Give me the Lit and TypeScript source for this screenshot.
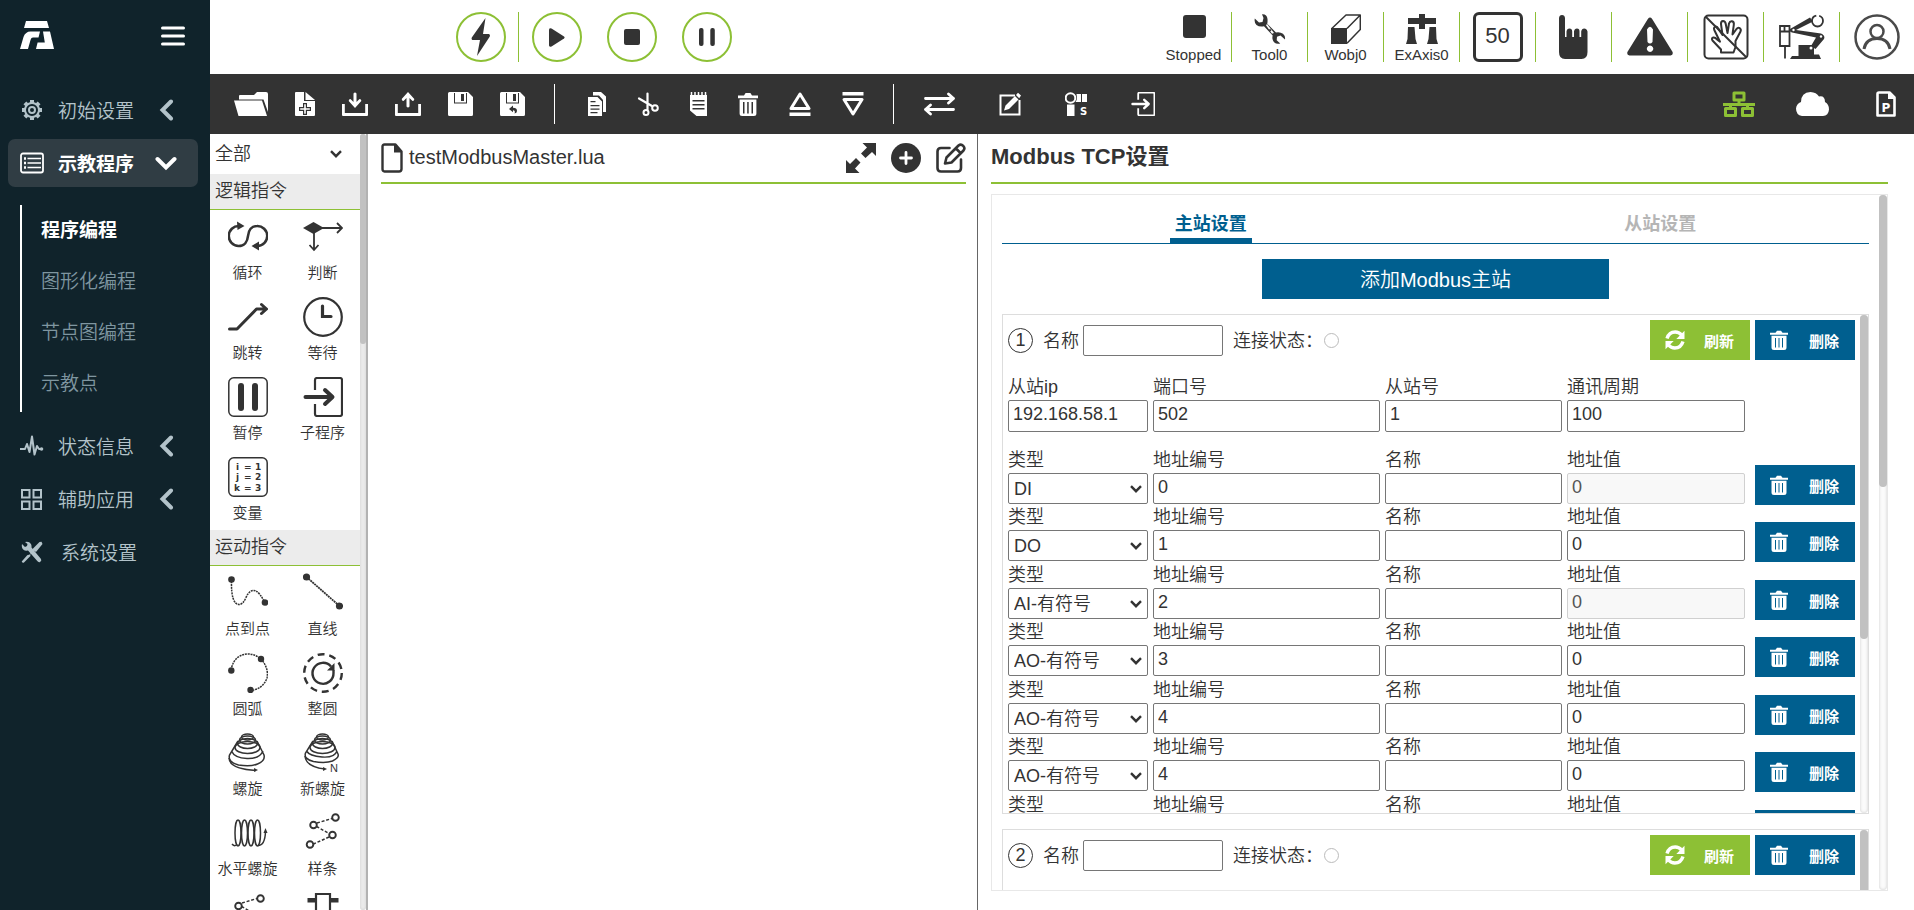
import { LitElement, html, svg, css, TemplateResult, SVGTemplateResult } from "lit";
import { customElement, property, state } from "lit/decorators.js";
import { classMap } from "lit/directives/class-map.js";
import { styleMap } from "lit/directives/style-map.js";

/* ---------- icons: [width, height, drawing] ---------- */

const trash = svg`<path d="M0 3.6h6l1.6-2.6h4.8L14 3.6h6v2.6H0z"/>
  <path fill-rule="evenodd" d="M1.6 7.6h16.8V21.500q0 2.500-2.500 2.500H4.100q-2.500 0-2.500-2.500zM5 10v11.500h1.500V10zm4.200 0v11.500h1.500V10zm4.300 0v11.500H15V10z"/>`;

const exitDoor = (w: number) => svg`<path fill="none" stroke="currentColor" stroke-width=${w} stroke-linejoin="round" d="M12 13V3q0-2 2-2h23q2 0 2 2v34q0 2-2 2H14q-2 0-2-2V27"/>
  <path fill="none" stroke="currentColor" stroke-width="4" stroke-linecap="round" stroke-linejoin="round" d="M2.500 20H29M22 13l7.500 7-7.500 7"/>`;

const floppy = svg`<path fill-rule="evenodd" d="M1.500 0H20l5 5v17.500q0 1.500-1.500 1.500h-22Q0 24 0 22.500v-21Q0 0 1.500 0zM6 1v10.500h13V1z"/>
  <path d="M7 0h11v10.500H7z"/><path fill="#333" d="M13 2h3v7h-3z"/>`;

const cone = svg`<ellipse cx="19.500" cy="4" rx="6" ry="3"/><ellipse cx="19.500" cy="7" rx="8" ry="4"/><ellipse cx="19.500" cy="10.500" rx="10" ry="5"/><ellipse cx="19.500" cy="14.500" rx="12.500" ry="6"/>`;

const ICONS: Record<string, [number, number, SVGTemplateResult]> = {
  logo: [34, 28, svg`<path d="M6 0h21l2 7H4zM0 28l3.500-12Q5.500 10.500 10.500 10.500H20L18.500 16.500H13q-1.800 0-2.400 2.200L8 28zM23 10.500h7L34 28H16l1.600-6.500h7.200z"/>`],
  menu: [24, 20, svg`<path stroke="currentColor" stroke-width="3" stroke-linecap="round" d="M1.500 2h21M1.500 10h21M1.500 18h21"/>`],
  gear: [24, 22, svg`<g fill="none" stroke="currentColor"><circle cx="12" cy="11" r="7" stroke-width="2"/><circle cx="12" cy="11" r="3" stroke-width="2"/>
    <path stroke-width="4" d="M12 1v3M12 18v3M2 11h3M19 11h3M4.900 3.900l2 2M17.100 16.100l2 2M4.900 18.100l2-2M17.100 5.900l2-2"/></g>`],
  list: [24, 22, svg`<rect x="1" y="1.500" width="22" height="19" rx="2" fill="none" stroke="currentColor" stroke-width="1.800"/>
    <path stroke="currentColor" stroke-width="1.300" d="M7.500 6.500H21M7.500 11H21M7.500 15.500H21"/><path stroke="currentColor" stroke-width="2" stroke-dasharray="2.500 2" d="M5 5.300v12"/>`],
  pulse: [24, 22, svg`<path fill="none" stroke="currentColor" stroke-width="2" stroke-linejoin="round" d="M0 14h5l2-5 2.500 8L12 1.500l2.500 18L17 11l2 3h2"/><circle cx="21.500" cy="14" r="1.800"/>`],
  grid: [24, 22, svg`<path fill="none" stroke="currentColor" stroke-width="2" d="M2 2h7.500v7.500H2zM13.500 2H21v7.500h-7.500zM2 13.500h7.500V21H2zM13.500 13.500H21V21h-7.500z"/>`],
  tools: [24, 22, svg`<path d="M2 3l3 3 2-1 .5-2L5 1q4-1 6 2 .8 1.500.5 3.500L21 18q1 2-1 3-1 .6-2.500-.8L8 9.500Q3 10.300 2 6.500 1.500 4.500 2 3z"/>
    <path d="M21.500.8L22.500 3 16 11 14 9.800 10 13.800q1 1-.3 2L4 21.500Q2.500 22.300 1.700 20.500L7 14.500q1-1.300 2-.5l4-4-1.200-1.300L19.500 1z"/>`],
  chevLeft: [15, 22, svg`<path fill="none" stroke="currentColor" stroke-width="4" stroke-linecap="round" d="M12 2.500L3.500 11l8.500 8.500"/>`],
  chevDown: [22, 15, svg`<path fill="none" stroke="currentColor" stroke-width="4" stroke-linecap="round" d="M2.500 3L11 11.500 19.500 3"/>`],

  bolt: [20, 38, svg`<path d="M14.500 0L12 16h6q1.500.8.8 2.500L6 38l3-16H1.300Q0 21 .8 19.500z"/>`],
  play: [16, 19, svg`<path d="M0 1.500Q.5-.3 2.500.5L15 8.500q1.200 1 0 2L2.500 18.600Q.5 19.300 0 17.500z"/>`],
  stop: [16, 16, svg`<rect width="16" height="16" rx="2"/>`],
  pause: [16, 18, svg`<rect width="4.500" height="18" rx="2"/><rect x="11.300" width="4.500" height="18" rx="2"/>`],
  stopped: [30, 30, svg`<rect x="4" y="1" width="23" height="23" rx="3"/>`],
  wrench: [32, 30, svg`<path fill-rule="evenodd" d="M8 .3Q13 0 13.500 5q.2 3.500-.3 4.700L22 18.500q4-.8 7 1.300 2.500 2.200 2 5.700l-4.500-4-3.500 1.300-.3 3.500 3.500 3.200q-6.500 1.300-7.700-4.500-.3-2 .2-3.400L10 12.300q-4.500 1-7.500-1.300Q0 9 .8 4.500L5 8.500 8.500 8 9.500 4z M12 11.200L18 19.800l2-.8-7-9zM15 15.800l1-1 1.500 1.500-1 1z"/>`],
  cube: [30, 30, svg`<path d="M0 14h16v16H0z"/><path fill="none" stroke="currentColor" stroke-width="1.500" stroke-linejoin="round" d="M.8 14.500L15 1h14.300L16 14.500M29.300 1v14.500L16 29.300"/>`],
  gantry: [32, 30, svg`<path d="M2 4h11V0h6v4h11v6H19v5h-6v-5H2zM2 13h6.500l1 12 1.500 5H0l1.500-5zM23.500 13H30l.5 12 1.500 5H21l1.500-5z"/>`],
  hand: [30, 44, svg`<path d="M0 3Q.3 0 3 0t3 3V22h1.500V16.500q.4-3 3-3t2.700 3V22H15V16.500q.4-3 3-3t2.500 3V22h1.700V16.500q.5-3 3-3t3.300 3V37q0 7-6 7H6q-6 0-6-7z"/>`],
  warn: [46, 40, svg`<path fill-rule="evenodd" d="M21 1.800Q23 -.8 25 1.800L45.600 35q.8 3-2 3.500H2.400Q-.4 38 .4 35zM20 12.500l.5 12.500q2.500 3 5 0L26 12.500q-3-5.500-6 0zM23 28.500a3.200 3.200 0 1 0 .1 0z"/>`],
  noHand: [46, 46, svg`<g fill="none" stroke="currentColor" stroke-width="2"><rect x="1.500" y="1.500" width="43" height="43" rx="4"/>
    <path stroke-linejoin="round" d="M18 38.500V35.500L9.500 26.500q-1.500-2.500 1-3 1.800-.2 3.500 2l3 2.200L11.300 16q-1-2.700 1.200-3.400 1.800-.3 2.800 2L19.500 21 18 10q-.2-2.800 2-3 2.200 0 2.700 2.700L24.500 19 26 9.500q.8-2.600 3-2.200 2.300.6 1.800 3.500L29.500 20.500l4-5.500q1.500-1.800 3.300-.8 1.700 1.300.6 3.500L32.500 27v6l-2 5.500z"/><path d="M3 3l40 40"/></g>`],
  robot: [46, 46, svg`<g fill="none" stroke="currentColor"><path stroke-width="1.800" d="M1 12h9.500v20H1zM1 17.500h9.500M5.500 12v5.500M6 32v12.500"/>
    <circle cx="38.500" cy="7" r="5.500" stroke-width="1.800" stroke-dasharray="24 3"/></g>
    <path d="M11 15L31 3.500l3 4L17 16l25 3.500q4.500 2 3 5.500L36.500 35 32 32l5-8.500L13 18.500q-3-1-2-3.500zM19.500 31H35v9.500h5L42 45H11l2-3h6.500z"/>
    <circle cx="14.500" cy="16" r="1.200" fill="#fff"/><circle cx="42" cy="22.500" r="1.200" fill="#fff"/><circle cx="32" cy="34" r="1.500" fill="#fff"/>`],
  user: [46, 46, svg`<g fill="none" stroke="#4a4a4a" stroke-width="2.500"><circle cx="23" cy="23" r="21.500"/><circle cx="23" cy="17.500" r="6.500"/><path stroke-width="3" d="M10 35q2-10.500 13-10.500T36 35"/></g>`],

  folder: [34, 24, svg`<path d="M5 4q0-1 1-1h14l3-3h9q2 0 2 2v18L29.500 7.500H5zM0 8.500h28L33 24H4.500z"/>`],
  fileNew: [20, 24, svg`<path fill-rule="evenodd" d="M1 0h8v9h11v14q0 1-1 1H1q-1 0-1-1V1Q0 0 1 0zM8 11v4H4v4h4v4h4v-4h4v-4h-4v-4zM9.200 12.200h1.600v4h4v1.600h-4v4H9.200v-4h-4v-1.600h4z"/><path d="M10.500 0L20 8h-9.500z"/>`],
  download: [26, 24, svg`<path d="M0 12h2.800v9h20.400v-9H26v11q0 1-1 1H1q-1 0-1-1zM11.500 1.500q1.500-2 3 0V10l3-3q2 0 1.800 2L13 16 6.700 9q0-2 1.800-2l3 3z"/>`],
  upload: [26, 24, svg`<path d="M0 12h2.800v9h20.400v-9H26v11q0 1-1 1H1q-1 0-1-1zM11.500 14.500q1.500 2 3 0V6l3 3q2 0 1.800-2L13 0 6.700 7q0 2 1.800 2l3-3z"/>`],
  save: [25, 24, floppy],
  saveAs: [25, 24, svg`${floppy}<path fill="#333" d="M9 17l4-3.500v2.300q4 0 4 3.200 0 2-2.500 2.500 1.200-3-1.500-3.200v2z"/>`],
  copy: [18, 24, svg`<path d="M5 0h8l5 4.500V20h-3V8l-4-4.500H5z"/><path fill-rule="evenodd" d="M0 5h9.500L14 9.500V24H0zM2.500 9v1.200h5V9zm0 4v1.200h9V13zm0 3.500v1.200h9v-1.200zm0 3.500v1.200h7V20z"/>`],
  cut: [22, 24, svg`<g fill="none" stroke="currentColor" stroke-width="2.200" stroke-linecap="round"><path d="M2 6.500l12.500 7.300M10.500 1.500v16"/><circle cx="18" cy="16" r="2.800" stroke-width="2"/><circle cx="9" cy="20.500" r="2.500" stroke-width="2"/></g>`],
  note: [17, 24, svg`<path fill-rule="evenodd" d="M0 3h17v21H6.500L0 18.500zM2.500 8v1.500h12V8zm0 4v1.500h12V12zm0 4v1.500h12V16z"/><path stroke="currentColor" stroke-width="1.500" d="M1.500 0v3M5 0v3M8.500 0v3M12 0v3M15.500 0v3"/>`],
  trash: [20, 24, trash],
  up: [22, 24, svg`<path fill="none" stroke="currentColor" stroke-width="3" stroke-linejoin="round" d="M11 2L20 16.500H2z"/><path d="M.5 20.500h21V24H.5z"/>`],
  down: [22, 24, svg`<path fill="none" stroke="currentColor" stroke-width="3" stroke-linejoin="round" d="M11 22L20 7.500H2z"/><path d="M.5 0h21v3.500H.5z"/>`],
  swap: [31, 24, svg`<path fill="none" stroke="currentColor" stroke-width="2.800" stroke-linecap="round" stroke-linejoin="round" d="M1.500 6.500h28M24.500 2l5 4.500-5 4.500M29.500 17.500h-28M6.500 13l-5 4.500 5 4.500"/>`],
  edit: [22, 24, svg`<path fill="none" stroke="currentColor" stroke-width="2" d="M16 3.500H1.500V22.500H20.500V8"/><path d="M5 18.500l1.500-5L16 4l3.500 3.500-9.500 9.500zM17 3l2-2.300L22 3.500l-1.800 2.700z"/>`],
  joint: [22, 24, svg`<circle cx="5.500" cy="6" r="4.800" fill="none" stroke="currentColor" stroke-width="2"/><path d="M11.500 2h4.500v8h-5.500q1.500-2 1.500-4zM17 2h5v8h-5zM2 12.500h7.500V24H2z"/><text x="15" y="23" class="glyph-s">S</text>`],
  exit: [24, 24, svg`<g transform="scale(.6)">${exitDoor(3)}</g>`],
  network: [32, 26, svg`<g fill="none" stroke="currentColor" stroke-width="3" stroke-linejoin="round"><rect x="11" y="2" width="10" height="7"/><path d="M16 9v4M0 13.500h32M7.500 13v4M24.500 13v4"/><rect x="2.500" y="17.500" width="10" height="7"/><rect x="19.500" y="17.500" width="10" height="7"/></g>`],
  cloud: [33, 24, svg`<path d="M6 24Q0 23 0 16.500q.5-5 5-6.500Q5 .5 14.500 0q6 .3 8.500 4.500 6-1 6 5.500 4 2 4 7.500-.5 6-6 6.500z"/>`],
  fileP: [20, 26, svg`<path fill="none" stroke="currentColor" stroke-width="2.600" stroke-linejoin="round" d="M3 1.500h10.500l5 5V24.500H1.500V3q0-1.500 1.500-1.500z"/><path d="M12 1v7h7z"/><text x="5.500" y="20.500" class="glyph-p">P</text>`],

  file: [22, 30, svg`<path fill="none" stroke="currentColor" stroke-width="2.400" stroke-linejoin="round" d="M3.500 1.500h11l6 7V26q0 2.500-2.500 2.500H3.500Q1.500 28.500 1.500 26V3.500q0-2 2-2z"/><path d="M13 1v8.500h8z"/>`],
  expand: [30, 30, svg`<path d="M16.500 0H30v13l-4-4-6.500 6-4.500-4.500L21 4.500zM13.500 30H0V17l4 4 6-6 4.500 4.500L9 25.500z"/>`],
  plus: [30, 30, svg`<circle cx="15" cy="15" r="15"/><path stroke="#fff" stroke-width="2.800" stroke-linecap="round" d="M15 9.500v11M9.500 15h11"/>`],
  compose: [30, 30, svg`<g fill="none" stroke="currentColor" stroke-width="2.600" stroke-linecap="round" stroke-linejoin="round"><path d="M13.500 5H5Q1.500 5 1.500 8.500V25Q1.500 28.500 5 28.500h16.500q3.500 0 3.500-3.500v-8.500"/><path d="M9 20.500L10.500 14.500 22.500 2.500q2.500-2 4.700.3t.3 4.700L15.500 19.500zM20 5.500l4.500 4.500"/></g>`],
  refresh: [20, 20, svg`<g fill="none" stroke="currentColor" stroke-width="3.400"><path d="M2 8.500Q4 2 10.200 2q3.800 0 6.300 3M18 11.500Q16 18 9.800 18 6 18 3.500 15"/></g><path d="M19.500.8V9H11.300zM.5 19.200V11h8.200z"/>`],
  trashSm: [18, 20, svg`<path d="M0 2.800h5.500L7 .8h4l1.500 2H18v1.900H0z"/><path fill-rule="evenodd" d="M1.500 5.800h15V17.500Q16.500 20 14 20H4q-2.500 0-2.500-2.500zM5 8v9.500h1V8zm3.500 0v9.500h1V8zm3.500 0v9.500h1V8z"/>`],
  caret: [12, 8, svg`<path fill="none" stroke="currentColor" stroke-width="2.400" d="M1 1.200l5 5 5-5"/>`],

  loop: [40, 40, svg`<path fill="none" stroke="currentColor" stroke-width="2.600" d="M11 9A10 10 0 0 0 10.500 29C16.500 29 19.500 24.500 20 19 20.500 13.500 23.500 9 29 9a10 10 0 0 1 .5 20"/><path d="M9 4.500l7.500 4.500L9.500 13zM31 24.500L23.500 29l7.500 4.500z"/>`],
  judge: [40, 40, svg`<path d="M0 11L10.500 5 21 11l-10.500 6z"/><path fill="none" stroke="currentColor" stroke-width="1.800" d="M18 11h21M34 6l5 5-5 5M11 15v18M6.500 28l4.500 5 4.500-5"/>`],
  jump: [40, 40, svg`<path fill="none" stroke="currentColor" stroke-width="3" stroke-linecap="round" stroke-linejoin="round" d="M1.500 32H9L28.500 12H38M33.500 7.500l5 4.500-5 4.500"/>`],
  clock: [40, 40, svg`<circle cx="20" cy="20" r="18.800" fill="none" stroke="currentColor" stroke-width="2.200"/><path fill="none" stroke="currentColor" stroke-width="3.200" stroke-linecap="round" d="M19.500 9v10.500H28"/>`],
  pauseBox: [40, 40, svg`<rect x=".8" y=".8" width="38.400" height="38.400" rx="5" fill="none" stroke="currentColor" stroke-width="1.500"/><rect x="10" y="6" width="6" height="28" rx="3"/><rect x="24" y="6" width="6" height="28" rx="3"/>`],
  sub: [40, 40, exitDoor(2.2)],
  vars: [40, 40, svg`<rect x=".8" y=".8" width="38.400" height="38.400" rx="5" fill="none" stroke="currentColor" stroke-width="1.500"/><g class="glyph-v"><text x="8" y="13">i</text><text x="16" y="13">=</text><text x="27" y="13">1</text><text x="8" y="23">j</text><text x="16" y="23">=</text><text x="27" y="23">2</text><text x="6" y="34">k</text><text x="16" y="34">=</text><text x="27" y="34">3</text></g>`],
  ptp: [40, 40, svg`<path fill="none" stroke="currentColor" stroke-width="1.500" stroke-dasharray="2 .8" d="M3.500 8Q3 31 11 31.500 15 31.500 18 24.500 22 15.500 28 18q4 2 9 12"/><circle cx="3.500" cy="6.500" r="3.300"/><circle cx="37" cy="29.500" r="3.300"/>`],
  line: [40, 40, svg`<path stroke="currentColor" stroke-width="1.800" stroke-dasharray="2 .6" d="M3.500 4L36.500 33"/><circle cx="3.500" cy="4" r="3.600"/><circle cx="36.500" cy="33" r="3.600"/>`],
  arc: [40, 40, svg`<path fill="none" stroke="currentColor" stroke-width="1.500" stroke-dasharray="2 .8" d="M3 17Q6 1.500 20 1 27 1 33 6 41 15 39 25 35 36 23 37.500"/><circle cx="3.300" cy="17.500" r="3.200"/><circle cx="33" cy="6" r="3.200"/><circle cx="22.500" cy="37" r="3.200"/>`],
  circle: [40, 40, svg`<circle cx="20" cy="20" r="18.800" fill="none" stroke="currentColor" stroke-width="2.400" stroke-dasharray="7 4.800"/><path fill="none" stroke="currentColor" stroke-width="2.400" d="M28 13.500A10.500 10.500 0 1 0 30.500 20V17"/><path d="M31.500 10v7.500H24z"/>`],
  spiral: [40, 40, svg`<g fill="none" stroke="currentColor" stroke-width="1.500">${cone}<path d="M10 8L1.500 22q-2 7 9 10 12 2 19-1 8-3.500 6.500-9L29 8M3.500 18q3 7 15.500 7.500T35 18"/><path d="M1 25q.5 11 27 12.500"/></g><path d="M26 35l4 2-4 2z"/>`],
  spiralN: [40, 40, svg`<g fill="none" stroke="currentColor" stroke-width="1.500">${cone}<path d="M10 8L2.500 20q-2 6 8 8.500 12 2 19-.5 7-3.500 5.500-7L29 8M3.500 18q3 5 15.500 6T34 18"/><path d="M2 23q1 11 20 13"/></g><path d="M20 34l4 2-4 2z"/><text x="27" y="39" class="glyph-n">N</text>`],
  coil: [40, 40, svg`<g fill="none" stroke="currentColor" stroke-width="1.500"><path d="M4 31q3 3.500 5 0"/><ellipse cx="10" cy="20" rx="3" ry="13"/><ellipse cx="16.500" cy="20" rx="3" ry="13"/><ellipse cx="23" cy="20" rx="3" ry="13"/><ellipse cx="29.500" cy="20" rx="3" ry="13"/><path d="M30 32.500q7 0 7.500-14"/></g><path d="M35.500 20l2-5 2 5z"/>`],
  spline: [40, 40, svg`<g fill="none" stroke="currentColor"><path stroke-width="1.500" stroke-dasharray="3 1.800" d="M14 10L29 5.500M13.500 13.500L27 21M26 24L10.500 31"/><g stroke-width="1.900"><circle cx="32.500" cy="4.500" r="3.300"/><circle cx="10.500" cy="12" r="3.300"/><circle cx="29.500" cy="22" r="3.300"/><circle cx="7" cy="31.500" r="3.300"/></g></g>`],
  splineN: [40, 40, svg`<g fill="none" stroke="currentColor"><path stroke-width="1.500" stroke-dasharray="3 1.800" d="M14 10L29 5.500M13.500 13.500L27 21"/><g stroke-width="1.900"><circle cx="32.500" cy="5.500" r="3.300"/><circle cx="10.500" cy="13" r="3.300"/><circle cx="29.500" cy="23" r="3.300"/></g></g>`],
  weave: [40, 40, svg`<path d="M4.500 5h8v4.500h-8zM27.500 5h8v4.500h-8z"/><path fill="none" stroke="currentColor" stroke-width="2.200" d="M13 1h14v20H13z"/>`],
};

const icon = (name: string): TemplateResult => {
  const [w, h, body] = ICONS[name];
  return html`<svg class="icon" width=${w} height=${h} viewBox="0 0 ${w} ${h}" fill="currentColor" aria-hidden="true">${body}</svg>`;
};

const base = css`
  :host {
    display: block;
    box-sizing: border-box;
    --green: #8dc035;
    --blue: #005f8f;
    --ink: #333;
    color: var(--ink);
    font-family: "Liberation Sans", "Noto Sans CJK SC", sans-serif;
    font-size: 18px;
    font-weight: 350;
  }
  *, *::before { box-sizing: border-box; }
  button {
    appearance: none;
    border: 0;
    margin: 0;
    padding: 0;
    background: none;
    color: inherit;
    font: inherit;
    cursor: pointer;
    display: flex;
    align-items: center;
    justify-content: center;
  }
  input, select { font: inherit; color: inherit; }
  a { color: inherit; text-decoration: none; }
  .icon { display: block; flex: none; }
  .glyph-s, .glyph-p, .glyph-v { font-family: "DejaVu Sans", sans-serif; font-weight: 700; }
  .glyph-s { font-size: 10px; }
  .glyph-p { font-size: 12px; }
  .glyph-v { font-size: 9px; }
  .glyph-n { font-size: 11px; }
  .track { flex: none; width: 8px; border-radius: 4px; background: #fbfbfb; box-shadow: inset 0 0 3px #ccc; }
  .thumb { background: #c1c1c1; border-radius: 4px; }
`;

const scrollTrack = (share: number) =>
  html`<div class="track"><div class="thumb" style=${styleMap({ height: share + "%" })}></div></div>`;

/* ---------- left navigation ---------- */

@customElement("side-nav")
class SideNav extends LitElement {
  static styles = [base, css`
    :host { background: #10232b; color: #b3c3ca; font-size: 19px; width: 210px; flex: none; }
    .brand { display: flex; justify-content: space-between; padding: 21px 25px 0 20px; height: 86px; color: #fff; }
    .brand button { height: 30px; }
    .menu { padding: 0 12px 0 8px; }
    .entry { display: flex; align-items: center; height: 48px; margin-bottom: 5px; padding: 0 20px 0 12px; border-radius: 7px; }
    .label { flex: 1; margin-left: 14px; padding-bottom: 2px; }
    .plain { margin-left: 17px; }
    .mark { display: flex; justify-content: center; width: 24px; }
    .current { background: #303d44; color: #fff; font-weight: 700; }
    .sub { margin: 18px 0 10px 12px; border-left: 2px solid #fff; padding-bottom: 3px; color: #7f96a0; }
    .sub a { display: block; line-height: 51px; padding-left: 19px; }
    .sub .on { color: #fff; font-weight: 700; }
  `];
  private entry(name: string, label: string, mark = "chevLeft", current = false) {
    return html`<a href="#" class=${classMap({ entry: true, current })}>${icon(name)}
      <span class=${classMap({ label: true, plain: !mark })}>${label}</span>
      ${mark ? html`<span class="mark">${icon(mark)}</span>` : ""}</a>`;
  }
  render() {
    return html`
      <div class="brand">${icon("logo")}<button aria-label="菜单">${icon("menu")}</button></div>
      <nav class="menu">
        ${this.entry("gear", "初始设置")}
        ${this.entry("list", "示教程序", "chevDown", true)}
        <div class="sub">
          ${["程序编程", "图形化编程", "节点图编程", "示教点"].map((t, i) => html`<a href="#" class=${classMap({ on: i === 0 })}>${t}</a>`)}
        </div>
        ${this.entry("pulse", "状态信息")}
        ${this.entry("grid", "辅助应用")}
        ${this.entry("tools", "系统设置", "")}
      </nav>`;
  }
}

/* ---------- status bar ---------- */

@customElement("status-bar")
class StatusBar extends LitElement {
  static styles = [base, css`
    :host { background: #fff; }
    .bar { display: flex; justify-content: space-between; align-items: center; height: 74px; padding-left: 246px; }
    .run { display: flex; align-items: center; gap: 25px; }
    .round { width: 50px; height: 50px; border: 2px solid var(--green); border-radius: 50%; }
    .power { display: flex; padding-right: 12px; margin-right: -12px; border-right: 1px solid var(--green); }
    .cells { display: flex; }
    .cell { width: 76px; height: 50px; border-right: 1px solid var(--green); flex-direction: column; font-size: 15px; line-height: 15px; }
    .cell:last-child { width: 74px; border: 0; }
    .named { justify-content: flex-end; gap: 3px; }
    .speed { width: 50px; height: 50px; border: 3px solid var(--ink); border-radius: 6px; font-size: 22px; line-height: 42px; }
  `];
  render() {
    const named = [["stopped", "Stopped"], ["wrench", "Tool0"], ["cube", "Wobj0"], ["gantry", "ExAxis0"]];
    const tools = [["hand", "拖动"], ["warn", "报警"], ["noHand", "锁定"], ["robot", "机器人"], ["user", "用户"]];
    return html`<header class="bar">
      <div class="run">
        <span class="power"><button class="round" aria-label="使能">${icon("bolt")}</button></span>
        <button class="round" aria-label="运行">${icon("play")}</button>
        <button class="round" aria-label="停止">${icon("stop")}</button>
        <button class="round" aria-label="暂停">${icon("pause")}</button>
      </div>
      <div class="cells">
        ${named.map(([i, t]) => html`<button class="cell named">${icon(i)}<span>${t}</span></button>`)}
        <button class="cell"><span class="speed">50</span></button>
        ${tools.map(([i, t]) => html`<button class="cell" aria-label=${t}>${icon(i)}</button>`)}
      </div>
    </header>`;
  }
}

/* ---------- dark tool bar ---------- */

@customElement("tool-strip")
class ToolStrip extends LitElement {
  static styles = [base, css`
    .strip { display: flex; align-items: center; height: 60px; padding: 0 18px 0 24px; background: #333; color: #fff; }
    .group { display: flex; gap: 27px; padding-right: 29px; }
    .edit { gap: 31px; padding: 0 29px 0 33px; }
    .flow { gap: 44px; padding: 0 0 0 30px; }
    .split { width: 1px; height: 40px; background: #fff; }
    .state { display: flex; align-items: center; gap: 41px; margin-left: auto; }
    .state button { padding-left: 6px; }
    .online { color: var(--green); }
  `];
  private buttons(items: string[][]) {
    return items.map(([i, t]) => html`<button aria-label=${t} title=${t}>${icon(i)}</button>`);
  }
  render() {
    return html`<div class="strip">
      <div class="group">${this.buttons([["folder", "打开"], ["fileNew", "新建"], ["download", "导入"], ["upload", "导出"], ["save", "保存"], ["saveAs", "另存为"]])}</div>
      <span class="split"></span>
      <div class="group edit">${this.buttons([["copy", "复制"], ["cut", "剪切"], ["note", "粘贴"], ["trash", "删除"], ["up", "上移"], ["down", "下移"]])}</div>
      <span class="split"></span>
      <div class="group flow">${this.buttons([["swap", "切换"], ["edit", "编辑"], ["joint", "关节"], ["exit", "跳入"]])}</div>
      <div class="state">
        <span class="online">${icon("network")}</span>${icon("cloud")}
        <button aria-label="程序">${icon("fileP")}</button>
      </div>
    </div>`;
  }
}

/* ---------- command palette ---------- */

@customElement("command-palette")
class CommandPalette extends LitElement {
  static styles = [base, css`
    :host { display: flex; flex: none; width: 158px; min-height: 0; border-right: 2px solid #b2b2b2; }
    .list { flex: 1; overflow: hidden; }
    .track { width: 6px; background: #ececec; }
    .filter { display: flex; align-items: center; height: 40px; padding: 0 18px 0 5px; }
    .filter select { appearance: none; flex: 1; border: 0; background: none; padding: 0; margin-right: -12px; }
    .filter .icon { pointer-events: none; }
    h2 { margin: 0; height: 36px; padding-left: 5px; font-size: 18px; font-weight: inherit; line-height: 35px; background: #ececec; border-bottom: 1px solid var(--green); }
    .tiles { display: grid; grid-template-columns: 1fr 1fr; }
    .tile { height: 80px; padding-top: 7px; flex-direction: column; justify-content: flex-start; gap: 7px; font-size: 15px; line-height: 18px; white-space: nowrap; }
  `];
  render() {
    const groups: [string, string[][]][] = [
      ["逻辑指令", [["loop", "循环"], ["judge", "判断"], ["jump", "跳转"], ["clock", "等待"], ["pauseBox", "暂停"], ["sub", "子程序"], ["vars", "变量"]]],
      ["运动指令", [["ptp", "点到点"], ["line", "直线"], ["arc", "圆弧"], ["circle", "整圆"], ["spiral", "螺旋"], ["spiralN", "新螺旋"], ["coil", "水平螺旋"], ["spline", "样条"], ["splineN", "新样条"], ["weave", "摆动"]]],
    ];
    return html`
      <div class="list">
        <div class="filter"><select aria-label="指令分类"><option>全部</option></select>${icon("caret")}</div>
        ${groups.map(([title, items]) => html`<h2>${title}</h2>
          <div class="tiles">${items.map(([i, t]) => html`<button class="tile">${icon(i)}<span>${t}</span></button>`)}</div>`)}
      </div>
      ${scrollTrack(27)}`;
  }
}

/* ---------- program editor ---------- */

@customElement("program-editor")
class ProgramEditor extends LitElement {
  static styles = [base, css`
    :host { flex: 0 1 610px; min-width: 0; padding: 0 11px 0 13px; border-right: 1px solid #666; }
    .head { display: flex; align-items: center; height: 50px; border-bottom: 2px solid var(--green); }
    .name { flex: 1; margin-left: 6px; font-size: 20px; line-height: 30px; padding-bottom: 2px; }
    .acts { display: flex; gap: 15px; }
  `];
  render() {
    return html`<div class="head">
      ${icon("file")}<span class="name">testModbusMaster.lua</span>
      <div class="acts">
        <button aria-label="展开">${icon("expand")}</button>
        <button aria-label="添加">${icon("plus")}</button>
        <button aria-label="编辑">${icon("compose")}</button>
      </div>
    </div>`;
  }
}

/* ---------- Modbus settings ---------- */

interface Register { kind: string; address: string; value: string; locked?: boolean; }
interface Station { id: number; ip: string; port: string; unit: string; period: string; registers: Register[]; }

const KINDS = ["DI", "DO", "AI-有符号", "AO-有符号"];
const REGISTERS: Register[] = [
  { kind: "DI", address: "0", value: "0", locked: true },
  { kind: "DO", address: "1", value: "0" },
  { kind: "AI-有符号", address: "2", value: "0", locked: true },
  { kind: "AO-有符号", address: "3", value: "0" },
  { kind: "AO-有符号", address: "4", value: "0" },
  { kind: "AO-有符号", address: "4", value: "0" },
  { kind: "AO-有符号", address: "5", value: "0" },
];

@customElement("station-card")
class StationCard extends LitElement {
  @property({ attribute: false }) station!: Station;
  static styles = [base, css`
    :host { display: flex; flex: none; height: 500px; border: 1px solid #ddd; }
    .body { flex: 1; min-width: 0; overflow: hidden; padding: 5px; }
    .head { display: flex; align-items: center; height: 40px; margin-bottom: 14px; }
    .head label, .state { padding-bottom: 2px; }
    .num { display: flex; align-items: center; justify-content: center; width: 25px; height: 25px; margin-right: 10px; border: 1px solid var(--ink); border-radius: 50%; }
    .head input { width: 140px; margin: 0 10px 0 4px; }
    .lamp { width: 15px; height: 15px; margin-left: 1px; border: 1px solid #bbb; border-radius: 50%; }
    .acts { display: flex; gap: 5px; margin-left: auto; }
    .act { width: 100px; height: 40px; padding: 0 16px 0 15px; justify-content: space-between; background: var(--blue); color: #fff; font-size: 15px; font-weight: 700; }
    .go { background: var(--green); }
    .row { display: grid; grid-template-columns: 140px 227fr 177fr 178fr 105px; column-gap: 5px; }
    .link { margin-bottom: 15px; }
    .reg:nth-child(even) { margin-bottom: 1px; }
    .reg .act { margin: 18px 0 -1px 5px; }
    .field { min-width: 0; }
    .field label { display: block; line-height: 26px; }
    input, select { display: block; width: 100%; height: 31px; border: 1px solid #767676; border-radius: 2px; background: #fff; padding: 0 4px 2px; }
    .pick { display: grid; align-items: center; }
    .pick select { appearance: none; grid-area: 1 / 1; padding: 0 0 0 5px; }
    .pick .icon { grid-area: 1 / 1; justify-self: end; margin-right: 6px; pointer-events: none; }
    .link input { height: 32px; padding-bottom: 3px; }
    input:disabled { background: #f8f8f8; border-color: #d0d0d0; color: #545454; }
  `];
  private field(id: string, label: string, value: string, off = false) {
    return html`<div class="field"><label for=${id}>${label}</label><input id=${id} .value=${value} ?disabled=${off}></div>`;
  }
  private remove() {
    return html`<button class="act">${icon("trashSm")}<span>删除</span></button>`;
  }
  render() {
    const s = this.station;
    return html`
      <div class="body">
        <div class="head">
          <span class="num">${s.id}</span><label for="name">名称</label><input id="name">
          <span class="state">连接状态：</span><span class="lamp"></span>
          <div class="acts"><button class="act go">${icon("refresh")}<span>刷新</span></button>${this.remove()}</div>
        </div>
        <div class="row link">
          ${this.field("ip", "从站ip", s.ip)}${this.field("port", "端口号", s.port)}
          ${this.field("unit", "从站号", s.unit)}${this.field("period", "通讯周期", s.period)}
        </div>
        <div>
        ${s.registers.map((r, i) => html`<div class="row reg">
          <div class="field"><label for="k${i}">类型</label>
            <div class="pick"><select id="k${i}">${KINDS.map((k) => html`<option ?selected=${k === r.kind}>${k}</option>`)}</select>${icon("caret")}</div></div>
          ${this.field("a" + i, "地址编号", r.address)}${this.field("n" + i, "名称", "")}
          ${this.field("v" + i, "地址值", r.value, r.locked)}
          ${this.remove()}
        </div>`)}
        </div>
      </div>
      ${scrollTrack(65)}`;
  }
}

@customElement("modbus-panel")
class ModbusPanel extends LitElement {
  @state() private tab = 0;
  static styles = [base, css`
    :host { flex: 1; display: flex; flex-direction: column; min-width: 0; min-height: 0; padding: 0 26px 19px 13px; }
    h1 { margin: 0 0 10px; height: 50px; font-size: 22px; font-weight: 700; line-height: 46px; border-bottom: 2px solid var(--green); }
    .frame { display: flex; flex: 1; min-height: 0; border: 1px solid #e8e8e8; }
    .page { flex: 1; min-width: 0; display: flex; flex-direction: column; gap: 15px; overflow: hidden; padding: 10px 10px 0 10px; }
    .tabs { display: grid; grid-template-columns: 1fr 1fr; column-gap: 32px; height: 39px; justify-items: center; border-bottom: 1px solid var(--blue); flex: none; }
    .tab { width: 82px; height: 38px; color: #b5b5b5; font-weight: 700; border-bottom: 5px solid transparent; }
    .on { color: var(--blue); border-color: var(--blue); }
    .add { flex: none; width: 40%; height: 40px; padding-bottom: 2px; align-self: center; background: var(--blue); color: #fff; font-size: 20px; }
  `];
  private stations: Station[] = [
    { id: 1, ip: "192.168.58.1", port: "502", unit: "1", period: "100", registers: REGISTERS },
    { id: 2, ip: "192.168.58.1", port: "502", unit: "1", period: "100", registers: [] },
  ];
  render() {
    return html`
      <h1>Modbus TCP设置</h1>
      <div class="frame">
        <div class="page">
          <div class="tabs" role="tablist">
            ${["主站设置", "从站设置"].map((t, i) => html`<button role="tab" class=${classMap({ tab: true, on: this.tab === i })} @click=${() => (this.tab = i)}>${t}</button>`)}
          </div>
          <button class="add">添加Modbus主站</button>
          ${this.stations.map((s) => html`<station-card .station=${s}></station-card>`)}
        </div>
        ${scrollTrack(42)}
      </div>`;
  }
}

@customElement("app-root")
class AppRoot extends LitElement {
  static styles = [base, css`
    :host { display: flex; height: 100vh; overflow: hidden; background: #fff; }
    .main { flex: 1; min-width: 0; display: flex; flex-direction: column; }
    .work { flex: 1; min-height: 0; display: flex; }
  `];
  render() {
    return html`<side-nav></side-nav>
      <div class="main">
        <status-bar></status-bar>
        <tool-strip></tool-strip>
        <main class="work">
          <command-palette></command-palette>
          <program-editor></program-editor>
          <modbus-panel></modbus-panel>
        </main>
      </div>`;
  }
}
